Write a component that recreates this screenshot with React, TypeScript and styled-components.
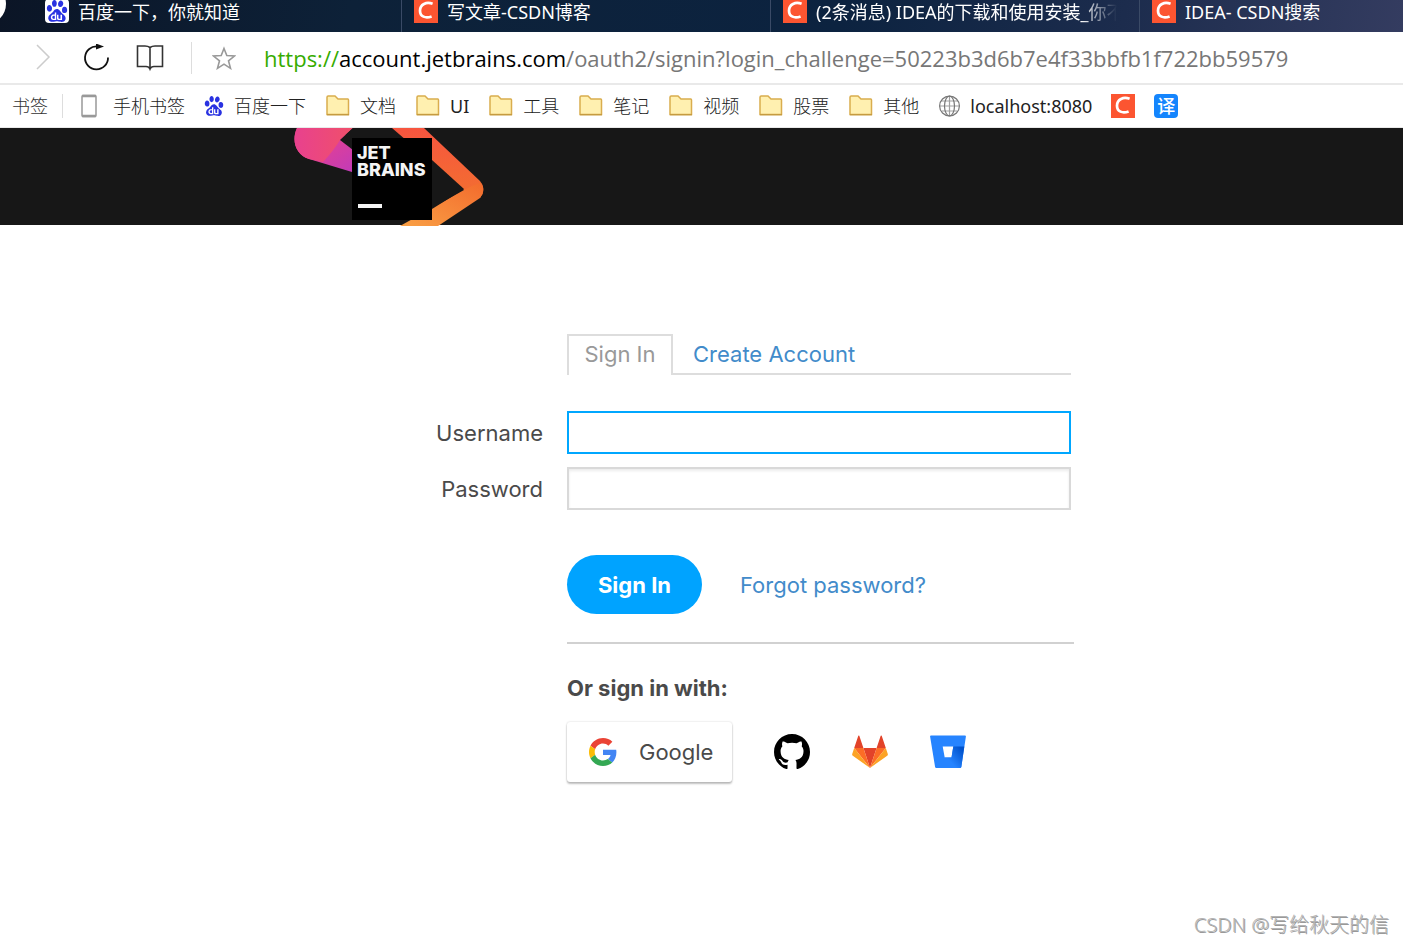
import React from 'react';
import styled, { createGlobalStyle } from 'styled-components';
import { SiBaidu } from 'react-icons/si';

const uiFont = `'Noto Sans', 'Noto Sans CJK SC', sans-serif`;
const addressFont = `'Open Sans', 'Noto Sans', sans-serif`;
const formFont = `Inter, 'Liberation Sans', sans-serif`;

const GlobalStyle = createGlobalStyle`
  *, *::before, *::after { box-sizing: border-box; }
  body { margin: 0; background: #fff; }
  button, input { font: inherit; }
`;

const Page = styled.div`
  display: flex;
  flex-direction: column;
  min-height: 100vh;
  overflow-x: hidden;
  font-family: ${uiFont};
  color: #333;
`;

const TabStrip = styled.nav`
  display: flex;
  height: 32px;
  overflow: hidden;
  background: linear-gradient(100deg, #0b1526 0%, #0d2138 25%, #0c2340 60%, #1c2c4d 80%, #343c60 100%);
`;

const StripEdge = styled.svg`
  flex: none;
  width: 33px;
  height: 32px;
`;

const BrowserTab = styled.a`
  display: flex;
  flex: none;
  align-items: center;
  gap: 9px;
  width: 369px;
  padding: 0 22px 10px 12px;
  border-right: 1px solid #3a4a66;
  color: #fff;
  font-size: 18px;
  line-height: 24px;
  text-decoration: none;

  &:last-child { border-right: 0; }
`;

const TabTitle = styled.span<{ $fade?: boolean }>`
  overflow: hidden;
  padding-top: 2px;
  white-space: nowrap;
  ${(p) => p.$fade && 'mask-image: linear-gradient(90deg, #000 88%, transparent 100%);'}
`;

const Badge = styled.span<{ $bg: string; $color?: string; $round?: boolean; $size?: number }>`
  display: flex;
  flex: none;
  align-items: center;
  justify-content: center;
  width: 24px;
  height: 24px;
  border-radius: ${(p) => (p.$round ? 4 : 0)}px;
  background: ${(p) => p.$bg};
  color: ${(p) => p.$color ?? '#fff'};
  font-size: ${(p) => p.$size ?? 18}px;
  font-weight: 500;
  line-height: 24px;
`;

const Toolbar = styled.div`
  display: flex;
  align-items: center;
  height: 53px;
  padding-left: 30px;
  border-bottom: 2px solid #e9e9e9;
`;

const ToolButton = styled.button<{ $gap: number }>`
  display: flex;
  flex: none;
  margin: 0 ${(p) => p.$gap}px 0 0;
  padding: 0;
  border: 0;
  background: none;
`;

const Divider = styled.span<{ $height: number; $gap: number }>`
  flex: none;
  width: 1px;
  height: ${(p) => p.$height}px;
  margin-right: ${(p) => p.$gap}px;
  background: #ddd;
`;

const Address = styled.div`
  flex: 1;
  overflow: hidden;
  font-family: ${addressFont};
  font-size: 22px;
  line-height: 32px;
  white-space: nowrap;
  color: #777;
`;

const Scheme = styled.span`
  color: #36ab00;
`;

const Host = styled.span`
  color: #000;
`;

const Bookmarks = styled.nav`
  display: flex;
  align-items: center;
  height: 43px;
  padding-left: 12px;
  border-bottom: 1px solid #e9e9e9;
  font-size: 18px;
  font-weight: 300;
  line-height: 24px;
  white-space: nowrap;
`;

const BookmarkLabel = styled.span`
  margin-right: 14px;
`;

const Bookmark = styled.a<{ $latin?: boolean }>`
  display: flex;
  align-items: center;
  gap: 10px;
  margin-right: 19px;
  color: #222;
  font-weight: ${(p) => (p.$latin ? 400 : 300)};
  text-decoration: none;
`;

const SiteHeader = styled.header`
  height: 97px;
  background: #171717;
`;

const HeaderInner = styled.div`
  max-width: 815px;
  margin: 0 auto;
`;

const Logo = styled.svg`
  display: block;
`;

const SignIn = styled.main`
  width: 100%;
  max-width: 739px;
  margin: 109px auto 0;
  padding-left: 235px;
  color: #4a4a4a;
  font-family: ${formFont};
  font-size: 22px;
  line-height: 24px;
`;

const Tabs = styled.div`
  display: flex;
  height: 41px;
  border-bottom: 2px solid #ddd;
`;

const ActiveTab = styled.button`
  width: 106px;
  height: 41px;
  padding: 0 0 4px;
  border: 2px solid #ddd;
  border-bottom: 0;
  background: #fff;
  color: #999;
`;

const Link = styled.a`
  color: #428bca;
  text-decoration: none;
`;

const TabLink = styled(Link)`
  padding: 8px 20px;
`;

const Form = styled.form`
  margin-top: 36px;
`;

const Field = styled.div`
  display: grid;
  grid-template-columns: 211px 1fr;
  column-gap: 24px;
  align-items: center;
  margin: 0 0 13px -235px;
`;

const Label = styled.label`
  text-align: right;
`;

const TextInput = styled.input`
  width: 100%;
  height: 43px;
  padding: 0 12px;
  border: 2px solid #d9d9d9;
  border-radius: 0;
  box-shadow: inset 0 2px 3px rgba(0, 0, 0, 0.08);
  outline: none;

  &:focus {
    border-color: #00a7ff;
    box-shadow: none;
    caret-color: transparent;
  }
`;

const Actions = styled.div`
  display: flex;
  align-items: center;
  gap: 38px;
  margin-top: 45px;
`;

const Submit = styled.button`
  width: 135px;
  height: 59px;
  padding: 0;
  border: 0;
  border-radius: 30px;
  background: #00a3ff;
  color: #fff;
  font-weight: 700;
`;

const Rule = styled.hr`
  height: 2px;
  margin: 28px -3px 32px 0;
  border: 0;
  background: #d1d1d1;
`;

const ProvidersTitle = styled.h2`
  margin: 0 0 22px;
  font-size: 22px;
  line-height: 24px;
  font-weight: 700;
`;

const Providers = styled.div`
  display: flex;
  align-items: center;
  gap: 42px;
`;

const GoogleButton = styled.button`
  display: flex;
  align-items: center;
  gap: 22px;
  width: 165px;
  height: 60px;
  padding: 0 0 0 22px;
  border: 0;
  border-radius: 3px;
  background: #fff;
  box-shadow: 0 0 2px rgba(0, 0, 0, 0.2), 0 2px 2px rgba(0, 0, 0, 0.24);
  color: #4a4a4a;
`;

const IconButton = styled.button`
  display: flex;
  padding: 0;
  border: 0;
  background: none;
`;

const Footer = styled.footer`
  margin-top: auto;
  padding: 0 14px 4px;
  color: #b4b4b4;
  font-size: 20px;
  font-weight: 300;
  line-height: 28px;
  text-align: right;
  text-shadow: 1px 1px 0 #999;
`;

const CsdnIcon = () => (
  <Badge $bg="#fc5531">
    <svg width="24" height="24" viewBox="0 0 24 24" fill="none" stroke="#fff" strokeWidth="2.700">
      <path d="M18.600 4.800C12.500 2.600 6 5 6 11.700c0 6 5.500 7.900 11.600 5.700" />
    </svg>
  </Badge>
);

const FolderIcon = () => (
  <svg width="25" height="22" viewBox="0 0 25 22">
    <path d="M2 2.200Q2 1 3.200 1H10l3 3h9.800Q23.500 4 23.500 5v14.500H2Z" fill="#fff0b0" stroke="#d9ad4e" strokeWidth="1.500" />
    <path d="M2 19.700h22" stroke="#c49a40" strokeWidth="1.300" />
  </svg>
);

const PhoneIcon = () => (
  <svg width="22" height="24" viewBox="0 0 22 24" fill="none" stroke="#999" strokeWidth="1.500">
    <rect x="1" y="1.500" width="14" height="21" rx="1" />
    <path d="M1 2h14M1 22h14" strokeWidth="2.500" />
  </svg>
);

const GlobeIcon = () => (
  <svg width="22" height="22" viewBox="0 0 22 22" fill="none" stroke="#777" strokeWidth="1.200">
    <circle cx="11.500" cy="11" r="9.900" />
    <ellipse cx="11.500" cy="11" rx="5" ry="10" />
    <path d="M11.500 1v20M2 11h19M3.500 6h16M3.500 16h16" strokeOpacity="0.700" />
  </svg>
);

const JetBrainsLogo = () => (
  <Logo width="200" height="98" viewBox="0 0 200 98" role="img" aria-label="JetBrains">
    <defs>
      <linearGradient id="pink" x1="0" y1="0" x2="1" y2="0">
        <stop offset="0" stopColor="#e8418e" />
        <stop offset="1" stopColor="#f0506a" />
      </linearGradient>
      <linearGradient id="violet" x1="0" y1="0" x2="1" y2="1">
        <stop offset="0.300" stopColor="#e8418e" />
        <stop offset="1" stopColor="#c13bb8" />
      </linearGradient>
      <linearGradient id="orange" x1="0" y1="0" x2="0" y2="1">
        <stop offset="0" stopColor="#f7553f" />
        <stop offset="1" stopColor="#f26f30" />
      </linearGradient>
      <linearGradient id="amber" x1="1" y1="0" x2="0" y2="1">
        <stop offset="0" stopColor="#f36b2d" />
        <stop offset="1" stopColor="#f9a045" />
      </linearGradient>
    </defs>
    <path d="M3 0H48L58 20V44L15 31C2 27-3 13 3 0Z" fill="url(#violet)" />
    <path d="M3 0H59L46 12Q40 22 29 34L15 31C2 27-3 13 3 0Z" fill="url(#pink)" />
    <path d="M46 12L59 0V22Z" fill="#171717" />
    <path d="M98 0h32l56 53q7 8 0 17l-16-8L98 0Z" fill="url(#orange)" />
    <path d="M170 62L106 98h38L186 70q6-7 1-15Q181 56 170 62Z" fill="url(#amber)" />
    <path d="M138 32L170 61L138 81Z" fill="#171717" />
    <rect x="58" y="10" width="80" height="82" fill="#000" />
    <g fill="#f4f4f4" fontFamily="Inter, sans-serif" fontSize="18" fontWeight="800">
      <text x="63" y="31">JET</text>
      <text x="63" y="48">BRAINS</text>
    </g>
    <rect x="64" y="76" width="24" height="4" fill="#f4f4f4" />
  </Logo>
);

const GoogleIcon = () => (
  <svg width="28" height="28" viewBox="0 0 48 48">
    <path fill="#EA4335" d="M24 9.500c3.540 0 6.710 1.220 9.210 3.600l6.850-6.850C35.900 2.380 30.470 0 24 0 14.620 0 6.510 5.380 2.560 13.220l7.980 6.190C12.430 13.720 17.740 9.500 24 9.500z" />
    <path fill="#4285F4" d="M46.980 24.550c0-1.570-.15-3.090-.38-4.550H24v9.020h12.940c-.58 2.960-2.260 5.480-4.780 7.180l7.730 6c4.510-4.180 7.090-10.360 7.090-17.650z" />
    <path fill="#FBBC05" d="M10.530 28.590c-.48-1.450-.76-2.990-.76-4.590s.27-3.140.76-4.590l-7.980-6.190C.92 16.460 0 20.120 0 24c0 3.880.92 7.540 2.560 10.780l7.970-6.190z" />
    <path fill="#34A853" d="M24 48c6.480 0 11.930-2.130 15.890-5.810l-7.730-6c-2.150 1.450-4.920 2.300-8.160 2.300-6.260 0-11.570-4.220-13.470-9.910l-7.980 6.190C6.510 42.620 14.620 48 24 48z" />
  </svg>
);

const GitHubIcon = () => (
  <svg width="36" height="36" viewBox="0 0 16 16">
    <path d="M8 0C3.580 0 0 3.580 0 8c0 3.540 2.290 6.530 5.470 7.590.4.070.55-.17.55-.38 0-.19-.01-.82-.01-1.490-2.010.37-2.530-.49-2.690-.94-.09-.23-.48-.94-.82-1.130-.28-.15-.68-.52-.01-.53.63-.01 1.080.58 1.230.82.72 1.210 1.870.87 2.330.66.070-.52.280-.87.510-1.070-1.780-.2-3.640-.89-3.640-3.950 0-.87.31-1.590.82-2.150-.08-.2-.36-1.020.08-2.120 0 0 .67-.21 2.200.82.64-.18 1.320-.27 2-.27s1.360.09 2 .27c1.530-1.040 2.200-.82 2.200-.82.44 1.100.16 1.920.08 2.120.51.56.82 1.270.82 2.150 0 3.070-1.870 3.750-3.650 3.950.29.25.54.73.54 1.480 0 1.070-.01 1.930-.01 2.200 0 .21.15.46.55.38A8.010 8.010 0 0 0 16 8c0-4.420-3.580-8-8-8z" />
  </svg>
);

const GitLabIcon = () => (
  <svg width="36" height="34" viewBox="0 0 36 34">
    <path d="M18 33L24.600 13H11.400Z" fill="#e24329" />
    <path d="M18 33L11.400 13H2.200ZM18 33L24.600 13H33.800Z" fill="#fc6d26" />
    <path d="M2.200 13L.2 19Q-.1 20 .8 20.700L18 33ZM33.800 13l2 6q.3 1-.6 1.700L18 33Z" fill="#fca326" />
    <path d="M2.200 13h9.200L7.300.8Q6.800 0 6.300.8ZM33.800 13h-9.200L28.700.8q.5-.8 1 0Z" fill="#e24329" />
  </svg>
);

const BitbucketIcon = () => (
  <svg width="36" height="34" viewBox="0 0 36 34">
    <defs>
      <linearGradient id="bucket" x1="34" y1="12" x2="19" y2="25" gradientUnits="userSpaceOnUse">
        <stop offset="0.150" stopColor="#0052cc" />
        <stop offset="1" stopColor="#2684ff" />
      </linearGradient>
    </defs>
    <path d="M1 .5h34q1 0 .9 1L31.300 32q-.2 1-1.300 1H6.300q-1 0-1.200-1L.1 1.500Q0 .5 1 .5ZM12.700 11.500l2 11h6.800l1.800-11Z" fill="#2684ff" fillRule="evenodd" />
    <path d="M34.300 11.500h-11l-1.800 11h-6.800L6 32.800l.8.200H30q1.100 0 1.300-1Z" fill="url(#bucket)" />
  </svg>
);

const folders = ['文档', 'UI', '工具', '笔记', '视频', '股票', '其他'];

export default function App() {
  return (
    <Page>
      <GlobalStyle />
      <TabStrip aria-label="Tabs">
        <StripEdge viewBox="0 0 33 32">
          <circle cx="-14" cy="4" r="20" fill="#fff" />
        </StripEdge>
        <BrowserTab href="#">
          <Badge $bg="#fff" $color="#2932e1" $round $size={22}><SiBaidu /></Badge>
          <TabTitle>百度一下，你就知道</TabTitle>
        </BrowserTab>
        <BrowserTab href="#"><CsdnIcon /><TabTitle>写文章-CSDN博客</TabTitle></BrowserTab>
        <BrowserTab href="#"><CsdnIcon /><TabTitle $fade>(2条消息) IDEA的下载和使用安装_你不</TabTitle></BrowserTab>
        <BrowserTab href="#"><CsdnIcon /><TabTitle>IDEA- CSDN搜索</TabTitle></BrowserTab>
      </TabStrip>

      <Toolbar>
        <ToolButton $gap={30} aria-label="Forward">
          <svg width="22" height="28" viewBox="0 0 22 28" fill="none" stroke="#ccc" strokeWidth="1.500">
            <path d="M7 1l12 12L7 25" />
          </svg>
        </ToolButton>
        <ToolButton $gap={26} aria-label="Reload">
          <svg width="28" height="28" viewBox="0 0 28 28" fill="none" stroke="#111" strokeWidth="1.800">
            <path d="M16 2.500A11.500 11.500 0 1 0 26 13.500" />
            <path d="M14-.5l8 3-8 3Z" fill="#111" stroke="none" />
          </svg>
        </ToolButton>
        <ToolButton $gap={27} aria-label="Reading list">
          <svg width="28" height="28" viewBox="0 0 28 28" fill="none" stroke="#333" strokeWidth="1.600">
            <path d="M14 3.500Q12 2 9 2H1.500v20.500H10q3 0 4 2.500 1-2.500 4-2.500h8.500V2H19q-3 0-5 1.500ZM14 3.500v22" />
          </svg>
        </ToolButton>
        <Divider $height={32} $gap={20} />
        <ToolButton $gap={28} aria-label="Add bookmark">
          <svg width="24" height="24" viewBox="0 0 24 24" fill="none" stroke="#999" strokeWidth="1.600">
            <path d="M12 2.500l2.800 7.100 7.700.4-6 4.800 2 7.500-6.500-4.200-6.500 4.200 2-7.500-6-4.800 7.700-.4Z" />
          </svg>
        </ToolButton>
        <Address>
          <Scheme>https://</Scheme><Host>account.jetbrains.com</Host>/oauth2/signin?login_challenge=50223b3d6b7e4f33bbfb1f722bb59579
        </Address>
      </Toolbar>

      <Bookmarks aria-label="Bookmarks">
        <BookmarkLabel>书签</BookmarkLabel>
        <Divider $height={24} $gap={18} />
        <Bookmark href="#"><PhoneIcon />手机书签</Bookmark>
        <Bookmark href="#"><SiBaidu size={20} color="#2932e1" />百度一下</Bookmark>
        {folders.map((name) => (
          <Bookmark href="#" key={name} $latin={name === 'UI'}><FolderIcon />{name}</Bookmark>
        ))}
        <Bookmark href="#" $latin><GlobeIcon />localhost:8080</Bookmark>
        <Bookmark href="#" aria-label="CSDN"><CsdnIcon /></Bookmark>
        <Bookmark href="#"><Badge $bg="#1485fd" $round>译</Badge></Bookmark>
      </Bookmarks>

      <SiteHeader>
        <HeaderInner><JetBrainsLogo /></HeaderInner>
      </SiteHeader>

      <SignIn>
        <Tabs>
          <ActiveTab type="button">Sign In</ActiveTab>
          <TabLink href="#">Create Account</TabLink>
        </Tabs>
        <Form onSubmit={(e) => e.preventDefault()}>
          <Field>
            <Label htmlFor="username">Username</Label>
            <TextInput id="username" autoFocus />
          </Field>
          <Field>
            <Label htmlFor="password">Password</Label>
            <TextInput id="password" type="password" />
          </Field>
          <Actions>
            <Submit type="submit">Sign In</Submit>
            <Link href="#">Forgot password?</Link>
          </Actions>
        </Form>
        <Rule />
        <ProvidersTitle>Or sign in with:</ProvidersTitle>
        <Providers>
          <GoogleButton type="button"><GoogleIcon />Google</GoogleButton>
          <IconButton type="button" aria-label="GitHub"><GitHubIcon /></IconButton>
          <IconButton type="button" aria-label="GitLab"><GitLabIcon /></IconButton>
          <IconButton type="button" aria-label="Bitbucket"><BitbucketIcon /></IconButton>
        </Providers>
      </SignIn>

      <Footer>CSDN @写给秋天的信</Footer>
    </Page>
  );
}
